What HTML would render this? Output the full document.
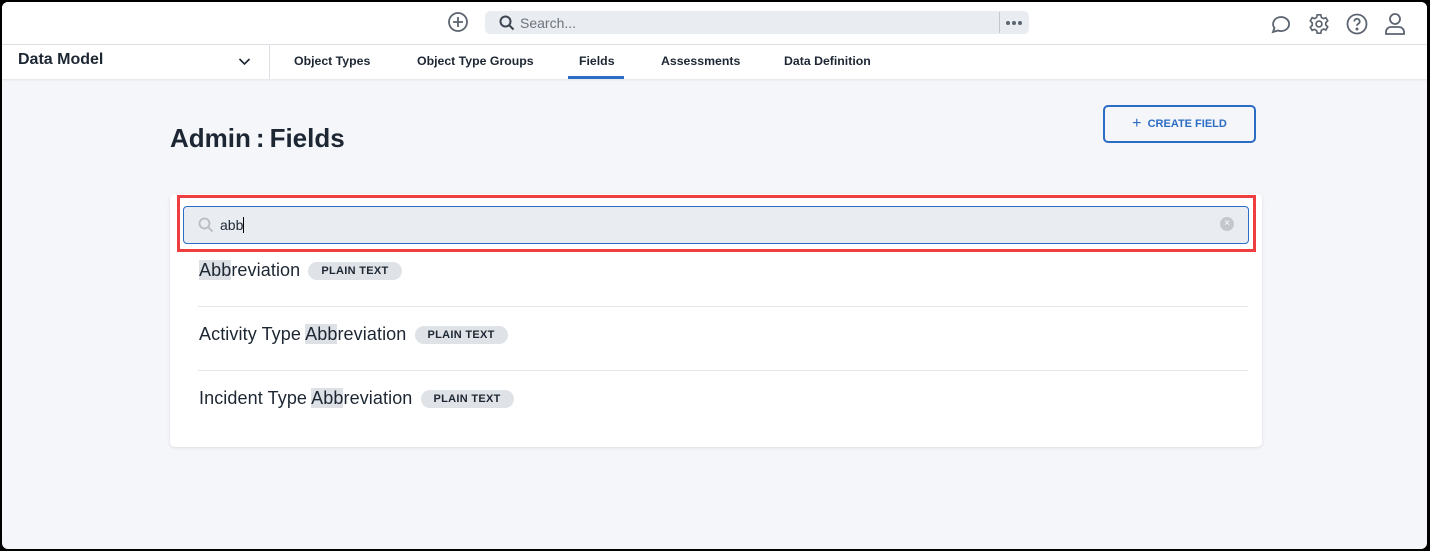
<!DOCTYPE html><html><head><style>
body{margin:0;width:1430px;height:551px;overflow:hidden;background:#000;font-family:"Liberation Sans",sans-serif}
.f{position:absolute;left:2px;top:2px;width:1425px;height:547px;background:#f5f6f9;border-radius:6px;overflow:hidden}
.top{position:absolute;left:0;top:0;width:100%;height:42px;background:#fff;border-bottom:1px solid #dcdfe3}
.nav{position:absolute;left:0;top:43px;width:100%;height:34px;background:#fff;box-shadow:0 1px 2px rgba(0,0,0,.08)}
.a{position:absolute}
.tab{position:absolute;top:9px;font-size:12.3px;font-weight:bold;color:#1d2733}
.row{position:absolute;left:29px;font-size:18px;color:#1d2733;letter-spacing:.1px}
.hl{background:#dde0e5}
.pill{display:inline-block;background:#dfe2e6;border-radius:9px;font-size:11px;font-weight:bold;color:#1d2733;padding:3px 13px;vertical-align:2px;margin-left:3px;letter-spacing:.3px}
.sep{position:absolute;left:28px;right:14px;height:1px;background:#e3e5e8}
.dot{position:absolute;top:10px;width:4px;height:4px;border-radius:50%;background:#5b6470}
</style></head><body><div class="f">
<div class="top">
<svg class="a" style="left:445px;top:9px" width="22" height="22" viewBox="0 0 22 22" fill="none" stroke="#5b6470" stroke-width="1.8"><circle cx="11" cy="11" r="9"/><path d="M11 6v10M6 11h10"/></svg>
<div class="a" style="left:483px;top:9px;width:544px;height:23px;background:#e9ecf0;border-radius:5px">
<svg class="a" style="left:14px;top:4px" width="16" height="16" viewBox="0 0 16 16" fill="none" stroke="#3b4450" stroke-width="2"><circle cx="6.5" cy="6.5" r="5"/><path d="M10 10l4.5 4.5"/></svg>
<span class="a" style="left:35px;top:4px;font-size:14px;color:#6b737d">Search...</span>
<div class="a" style="left:514px;top:1px;width:1px;height:21px;background:#c4c8cd"></div>
<div class="dot" style="left:521px"></div><div class="dot" style="left:527px"></div><div class="dot" style="left:533px"></div></div>
<svg class="a" style="left:1267px;top:11px" width="24" height="22" viewBox="0 0 24 22" fill="none" stroke="#5b6470" stroke-width="1.8"><path d="M4 19l1.5-4A8 7 0 1 1 9 17.5z"/></svg>
<svg class="a" style="left:1306px;top:11px" width="22" height="22" viewBox="0 0 24 24" fill="none" stroke="#5b6470" stroke-width="1.8"><circle cx="12" cy="12" r="3.2"/><path d="M10 2h4l.6 2.8 2.2 1.3 2.7-1 2 3.5-2.1 1.9v2.6l2.1 1.9-2 3.5-2.7-1-2.2 1.3L14 22h-4l-.6-2.8-2.2-1.3-2.7 1-2-3.5 2.1-1.9v-2.6L2.5 8.6l2-3.5 2.7 1 2.2-1.3z"/></svg>
<svg class="a" style="left:1344px;top:11px" width="22" height="22" viewBox="0 0 22 22" fill="none" stroke="#5b6470" stroke-width="1.8"><circle cx="11" cy="11" r="9.5"/><path d="M8.3 8.5a2.7 2.7 0 1 1 3.7 2.5c-.8.4-1 1-1 1.8"/><circle cx="11" cy="16" r=".6" fill="#5b6470"/></svg>
<svg class="a" style="left:1382px;top:10px" width="22" height="24" viewBox="0 0 22 24" fill="none" stroke="#5b6470" stroke-width="1.8"><circle cx="11" cy="7" r="5"/><path d="M2 22v-2a5 5 0 0 1 5-5h8a5 5 0 0 1 5 5v2z"/></svg>
</div>
<div class="nav">
<span class="a" style="left:16px;top:6px;font-size:16px;font-weight:bold;color:#1d2733">Data Model</span>
<svg class="a" style="left:236px;top:12px" width="13" height="9" viewBox="0 0 13 9" fill="none" stroke="#1d2733" stroke-width="1.6"><path d="M1.5 2l5 5 5-5"/></svg>
<div class="a" style="left:267px;top:0;width:1px;height:34px;background:#dcdfe3"></div>
<span class="tab" style="left:292px">Object Types</span>
<span class="tab" style="left:415px">Object Type Groups</span>
<span class="tab" style="left:577px">Fields</span>
<div class="a" style="left:566px;top:31px;width:56px;height:3px;background:#2b6cc4"></div>
<span class="tab" style="left:659px">Assessments</span>
<span class="tab" style="left:782px">Data Definition</span>
</div>
<div class="a" style="left:168px;top:121px;font-size:26px;font-weight:bold;color:#1d2733">Admin<span style="margin:0 5px">:</span>Fields</div>
<div class="a" style="left:1101px;top:103px;width:149px;height:34px;border:2px solid #2b6cc4;border-radius:5px;color:#2b6cc4;font-size:11px;font-weight:bold;line-height:34px;text-align:center"><span style="font-size:16px;font-weight:normal;vertical-align:-1px">+</span>&nbsp; CREATE FIELD</div>
<div class="a" style="left:168px;top:192px;width:1092px;height:253px;background:#fff;border-radius:5px;box-shadow:0 1px 3px rgba(0,0,0,.1)">
<div class="a" style="left:7px;top:1px;width:1073px;height:51px;border:3px solid #ef3e42"></div>
<div class="a" style="left:13px;top:12px;width:1064px;height:36px;background:#e9ecf1;border:1px solid #2b6cc4;border-radius:4px">
<svg class="a" style="left:14px;top:10px" width="16" height="16" viewBox="0 0 16 16" fill="none" stroke="#b9bdc3" stroke-width="1.8"><circle cx="6.5" cy="6.5" r="5"/><path d="M10 10l4.5 4.5"/></svg>
<span class="a" style="left:36px;top:10px;font-size:14px;color:#1d2733">abb<span style="border-right:1px solid #000"></span></span>
<div class="a" style="left:1036px;top:10px;width:14px;height:14px;border-radius:50%;background:#c4c8cd;color:#fff;font-size:10px;line-height:14px;text-align:center">×</div></div>
<div class="row" style="top:66px"><span class="hl">Abb</span>reviation <span class="pill">PLAIN TEXT</span></div>
<div class="sep" style="top:112px"></div>
<div class="row" style="top:130px">Activity Type <span class="hl">Abb</span>reviation <span class="pill">PLAIN TEXT</span></div>
<div class="sep" style="top:176px"></div>
<div class="row" style="top:194px">Incident Type <span class="hl">Abb</span>reviation <span class="pill">PLAIN TEXT</span></div>
</div>
</div></body></html>
